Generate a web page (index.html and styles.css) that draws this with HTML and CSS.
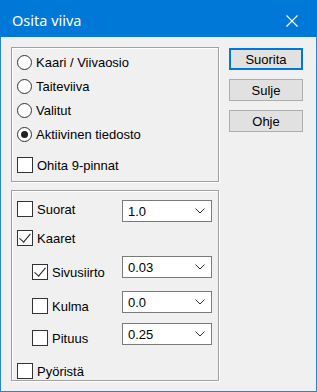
FILE: index.html
```html
<!DOCTYPE html>
<html lang="fi">
  <head>
    <meta charset="UTF-8" />
    <title>Osita viiva</title>
    <link rel="stylesheet" href="styles.css">
  </head>
  <body>
    <div class="window">
      <div class="titlebar">
        <span class="title">Osita viiva</span>
        <svg class="close" width="12" height="12" viewBox="0 0 12 12">
          <path d="M0.5 0.5 L11.5 11.5 M11.5 0.5 L0.5 11.5" stroke="#fff" stroke-width="1.2" fill="none" />
        </svg>
      </div>

      <div class="content">
        <div class="left">
          <div class="group group1">
            <div class="row radio-row"><span class="radio"></span>Kaari / Viivaosio</div>
            <div class="row radio-row"><span class="radio"></span>Taiteviiva</div>
            <div class="row radio-row"><span class="radio"></span>Valitut</div>
            <div class="row radio-row"><span class="radio checked"></span>Aktiivinen tiedosto</div>
            <div class="row radio-row skip"><span class="check"></span>Ohita 9-pinnat</div>
          </div>

          <div class="group group2">
            <div class="opt r-suorat">
              <div class="lbl"><span class="check"></span>Suorat</div>
              <div class="combo">1.0<svg width="10" height="6" viewBox="0 0 10 6"><path d="M0.5 0.5 L5 5 L9.5 0.5" stroke="#333" fill="none" /></svg></div>
            </div>
            <div class="opt r-kaaret">
              <div class="lbl"><span class="check on"></span>Kaaret</div>
            </div>
            <div class="opt sub r-sivu">
              <div class="lbl"><span class="check on"></span>Sivusiirto</div>
              <div class="combo">0.03<svg width="10" height="6" viewBox="0 0 10 6"><path d="M0.5 0.5 L5 5 L9.5 0.5" stroke="#333" fill="none" /></svg></div>
            </div>
            <div class="opt sub r-kulma">
              <div class="lbl"><span class="check"></span>Kulma</div>
              <div class="combo">0.0<svg width="10" height="6" viewBox="0 0 10 6"><path d="M0.5 0.5 L5 5 L9.5 0.5" stroke="#333" fill="none" /></svg></div>
            </div>
            <div class="opt sub r-pituus">
              <div class="lbl"><span class="check"></span>Pituus</div>
              <div class="combo">0.25<svg width="10" height="6" viewBox="0 0 10 6"><path d="M0.5 0.5 L5 5 L9.5 0.5" stroke="#333" fill="none" /></svg></div>
            </div>
            <div class="opt r-pyor">
              <div class="lbl"><span class="check"></span>Pyöristä</div>
            </div>
          </div>
        </div>

        <div class="buttons">
          <button class="btn default">Suorita</button>
          <button class="btn">Sulje</button>
          <button class="btn">Ohje</button>
        </div>
      </div>
    </div>
  </body>
</html>
```

FILE: styles.css
```css
body {
  margin: 0;
  font-family: "Liberation Sans", Arial, sans-serif;
  font-size: 13px;
  color: #000;
  background: #f0f0f0;
}
.window {
  width: 317px;
  height: 392px;
  box-sizing: border-box;
  border: 1px solid #2a84d2;
  border-top: none;
  background: #f0f0f0;
}
.titlebar {
  height: 37px;
  margin: 0 -1px;
  background: #0078d7;
  display: flex;
  align-items: center;
  justify-content: space-between;
  padding: 0 19px 0 12px;
}
.title {
  color: #fff;
  font-family: "Noto Sans", "Open Sans", sans-serif;
  font-size: 14.5px;
  margin-top: 2px;
}
.close {
  margin-top: 4px;
}
.content {
  display: flex;
  padding: 10px 0 0 10px;
  gap: 10px;
}
.left {
  width: 208px;
  display: flex;
  flex-direction: column;
  gap: 8px;
}
.group {
  border: 1px solid #a0a0a0;
  box-shadow: inset 1px 1px 0 #fff, 1px 1px 0 #fff;
  box-sizing: border-box;
}
.group1 {
  height: 135px;
  padding: 2px 0 0 5px;
}
.row {
  height: 24px;
  display: flex;
  align-items: center;
}
.radio {
  width: 13px;
  height: 13px;
  border: 1px solid #333;
  border-radius: 50%;
  background: #fff;
  margin-right: 4px;
  position: relative;
}
.radio.checked::after {
  content: "";
  position: absolute;
  left: 3px;
  top: 3px;
  width: 7px;
  height: 7px;
  border-radius: 50%;
  background: #222;
}
.skip {
  margin-top: 7px;
}
.check {
  width: 14px;
  height: 14px;
  border: 1px solid #333;
  background: #fff;
  margin-right: 4px;
  flex: none;
  position: relative;
}
.check.on::after {
  content: "";
  position: absolute;
  left: 4px;
  top: 0px;
  width: 5px;
  height: 10px;
  border-right: 1.3px solid #222;
  border-bottom: 1.3px solid #222;
  transform: rotate(40deg);
}
.group2 {
  height: 191px;
  padding-left: 5px;
}
.opt {
  display: flex;
  align-items: flex-start;
}
.lbl {
  width: 105px;
  display: flex;
  align-items: center;
  height: 16px;
}
.sub .lbl {
  padding-left: 15px;
  width: 90px;
  margin-top: 8px;
}
.combo {
  width: 90px;
  height: 22px;
  box-sizing: border-box;
  border: 1px solid #7a7a7a;
  background: #fff;
  display: flex;
  align-items: center;
  justify-content: space-between;
  padding: 0 6px 0 5px;
}
.r-suorat {
  margin-top: 9px;
}
.r-suorat .lbl {
  margin-top: 1px;
}
.r-kaaret {
  margin-top: 8px;
}
.r-sivu {
  margin-top: 10px;
}
.r-kulma {
  margin-top: 11px;
}
.r-kulma .lbl,
.r-pituus .lbl {
  margin-top: 7px;
}
.r-pituus {
  margin-top: 9px;
}
.r-pyor {
  margin-top: 17px;
}
.buttons {
  display: flex;
  flex-direction: column;
  gap: 9px;
  padding-top: 1px;
}
.btn {
  width: 74px;
  height: 22px;
  font-family: "Liberation Sans", Arial, sans-serif;
  font-size: 13px;
  color: #000;
  background: #e1e1e1;
  border: 1px solid #adadad;
  padding: 0;
}
.btn.default {
  border: 2px solid #0078d7;
}
```
